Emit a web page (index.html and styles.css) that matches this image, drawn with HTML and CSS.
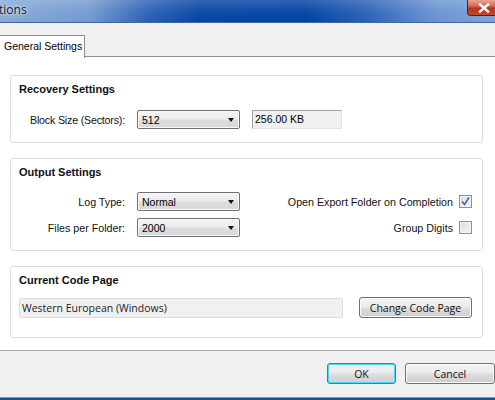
FILE: index.html
```html
<!DOCTYPE html>
<html>
<head>
<meta charset="utf-8">
<link rel="stylesheet" href="styles.css">
</head>
<body>
<div class="window">
  <div class="titlebar">
    <span class="title">tions</span>
    <span class="close"><svg width="14" height="10" viewBox="0 0 14 10"><path d="M3 1.5 L11 8.5 M11 1.5 L3 8.5" stroke="#fff" stroke-width="2.4" stroke-linecap="square"/></svg></span>
  </div>
  <div class="client">
    <div class="tabstrip">
      <div class="tab">General Settings</div>
    </div>
    <div class="pane">
      <div class="group g-recovery">
        <div class="gtitle">Recovery Settings</div>
        <div class="row">
          <span class="label lbl-block">Block Size (Sectors):</span>
          <div class="combo"><span>512</span><i class="arrow"></i></div>
          <div class="readonly">256.00 KB</div>
        </div>
      </div>
      <div class="group g-output">
        <div class="gtitle">Output Settings</div>
        <div class="outgrid">
          <span class="label rlabel">Log Type:</span>
          <div class="combo"><span>Normal</span><i class="arrow"></i></div>
          <div class="check-row"><span class="label">Open Export Folder on Completion</span><span class="checkbox checked"><svg width="11" height="11" viewBox="0 0 11 11"><path d="M2 5.5 L4.5 8.5 L9 1.5" fill="none" stroke="#3d5fa8" stroke-width="1.4"/></svg></span></div>
          <span class="label rlabel">Files per Folder:</span>
          <div class="combo"><span>2000</span><i class="arrow"></i></div>
          <div class="check-row"><span class="label">Group Digits</span><span class="checkbox"></span></div>
        </div>
      </div>
      <div class="group g-code">
        <div class="gtitle">Current Code Page</div>
        <div class="coderow">
          <div class="codefield">Western European (Windows)</div>
          <div class="btn btn-change">Change Code Page</div>
        </div>
      </div>
    </div>
    <div class="footer">
      <div class="btn btn-ok">OK</div>
      <div class="btn btn-cancel">Cancel</div>
    </div>
  </div>
  <div class="bottomedge"></div>
</div>
</body>
</html>
```
FILE: styles.css
```css
* { box-sizing: border-box; }
html, body { margin: 0; padding: 0; }
body {
  width: 495px;
  height: 400px;
  overflow: hidden;
  font-family: "Liberation Sans", Arial, sans-serif;
  font-size: 11px;
  color: #000;
  background: #f0f0f0;
}
.window {
  width: 495px;
  height: 400px;
  display: flex;
  flex-direction: column;
}
.titlebar {
  height: 23px;
  flex: none;
  display: flex;
  justify-content: space-between;
  align-items: flex-start;
  background:
    linear-gradient(to bottom, rgba(255,255,255,0.18) 0%, rgba(255,255,255,0.05) 50%, rgba(0,0,0,0) 100%),
    linear-gradient(to right, #86a9d8 0%, #7399d0 18%, #2a5fb4 30%, #0644a4 40%, #0042a2 62%, #2a60b6 74%, #6a93d2 88%, #7ba2d9 100%);
  border-bottom: 1px solid #3f66a0;
}
.title {
  font-family: "Open Sans", "Liberation Sans", sans-serif;
  font-size: 12px;
  line-height: 20px;
  color: #0c1a2e;
  text-shadow: 0 0 6px rgba(255,255,255,0.8), 0 0 3px rgba(255,255,255,0.8);
  margin-left: -1px;
}
.close {
  width: 30px;
  height: 16px;
  margin-right: -2px;
  background: linear-gradient(to bottom, #e8a393 0%, #d36b55 40%, #b8321c 55%, #c7472c 100%);
  border: 1px solid #5a1e14;
  border-top: none;
  border-radius: 0 0 0 4px;
  display: flex;
  align-items: center;
  justify-content: center;
  padding-left: 4px;
}
.close svg { display: block; }
.client {
  flex: 1;
  display: flex;
  flex-direction: column;
  background: #f0f0f0;
}
.tabstrip {
  height: 34px;
  padding-top: 12px;
  display: flex;
  flex: none;
}
.tab {
  width: 86px;
  height: 23px;
  margin-left: -1px;
  background: #fff;
  border: 1px solid #898c95;
  border-bottom: none;
  font-size: 10.5px;
  padding-left: 4px;
  line-height: 21px;
  color: #000;
  position: relative;
  z-index: 1;
}
.pane {
  background: #fff;
  border-top: 1px solid #898c95;
  border-bottom: 1px solid #a7a9ae;
  height: 295px;
  padding: 18px 12px 0 10px;
  display: flex;
  flex-direction: column;
  gap: 15px;
  margin-top: -1px;
}
.group {
  border: 1px solid #d5dfe5;
  border-radius: 3px;
  padding: 6px 0 0 8px;
}
.gtitle {
  font-weight: bold;
  font-size: 11px;
  line-height: 14px;
  color: #111;
}
.g-recovery { height: 68px; }
.g-output { height: 93px; }
.g-code { height: 72px; }
.row {
  display: flex;
  align-items: center;
  margin-top: 14px;
}
.label { font-size: 10.7px; color: #111; white-space: nowrap; }
.lbl-block { width: 118px; padding-left: 11px; letter-spacing: -0.2px; }
.combo {
  width: 103px;
  height: 19px;
  border: 1px solid #707070;
  border-radius: 2px;
  background: linear-gradient(to bottom, #f4f4f4 0%, #ececec 48%, #dedede 52%, #d8d8d8 100%);
  display: flex;
  align-items: center;
  justify-content: space-between;
  padding: 0 5px 0 4px;
  font-size: 10.5px;
  box-shadow: inset 0 0 0 1px #f8f8f8;
}
.arrow {
  width: 0;
  height: 0;
  border-left: 3.5px solid transparent;
  border-right: 3.5px solid transparent;
  border-top: 4px solid #111;
  margin-top: 1px;
}
.readonly {
  margin-left: 12px;
  width: 90px;
  height: 19px;
  background: #f0f0f0;
  border: 1px solid #e3e3e3;
  border-top-color: #a0a0a0;
  border-left-color: #a0a0a0;
  font-size: 10.5px;
  line-height: 17px;
  padding-left: 2px;
}
.outgrid {
  display: grid;
  grid-template-columns: 118px 103px 1fr;
  grid-template-rows: 19px 19px;
  row-gap: 7px;
  align-items: center;
  margin-top: 13px;
}
.rlabel { text-align: right; padding-right: 12px; }
.check-row {
  display: flex;
  justify-content: flex-end;
  align-items: center;
  gap: 6px;
  padding-right: 10px;
}
.checkbox {
  width: 13px;
  height: 13px;
  border: 1px solid #8f8f8f;
  background: linear-gradient(135deg, #dcdcdc 0%, #f5f5f5 100%);
  box-shadow: inset 0 0 0 1px #f4f4f4;
  display: flex;
  align-items: center;
  justify-content: center;
}
.checkbox.checked { background: linear-gradient(135deg, #d6dbe4 0%, #f2f4f8 100%); }
.checkbox svg { display: block; }
.coderow {
  display: flex;
  align-items: center;
  margin-top: 10px;
  gap: 16px;
}
.codefield {
  width: 324px;
  height: 20px;
  background: #f0f0f0;
  border: 1px solid #dcdcdc;
  border-radius: 2px;
  font-family: "Open Sans", "Liberation Sans", sans-serif;
  font-size: 10.5px;
  line-height: 18px;
  padding-left: 2px;
  color: #222;
}
.btn {
  height: 21px;
  border: 1px solid #707070;
  border-radius: 3px;
  background: linear-gradient(to bottom, #f2f2f2 0%, #ebebeb 48%, #dddddd 52%, #cfcfcf 100%);
  box-shadow: inset 0 0 0 1px #fbfbfb;
  display: flex;
  align-items: center;
  justify-content: center;
  font-family: "Open Sans", "Liberation Sans", sans-serif;
  font-size: 10.5px;
  color: #111;
}
.btn-change { width: 113px; }
.footer {
  flex: 1;
  display: flex;
  align-items: flex-start;
  padding-top: 12px;
  padding-left: 327px;
  gap: 9px;
}
.btn-ok {
  width: 81px;
  border-color: #3c7fb1;
  box-shadow: inset 0 0 0 1px #48d8fb;
}
.btn-cancel { width: 90px; flex: none; }
.bottomedge {
  height: 3px;
  flex: none;
  background: #1d4f93;
  border-top: 1px solid #7a9cc8;
}
```
